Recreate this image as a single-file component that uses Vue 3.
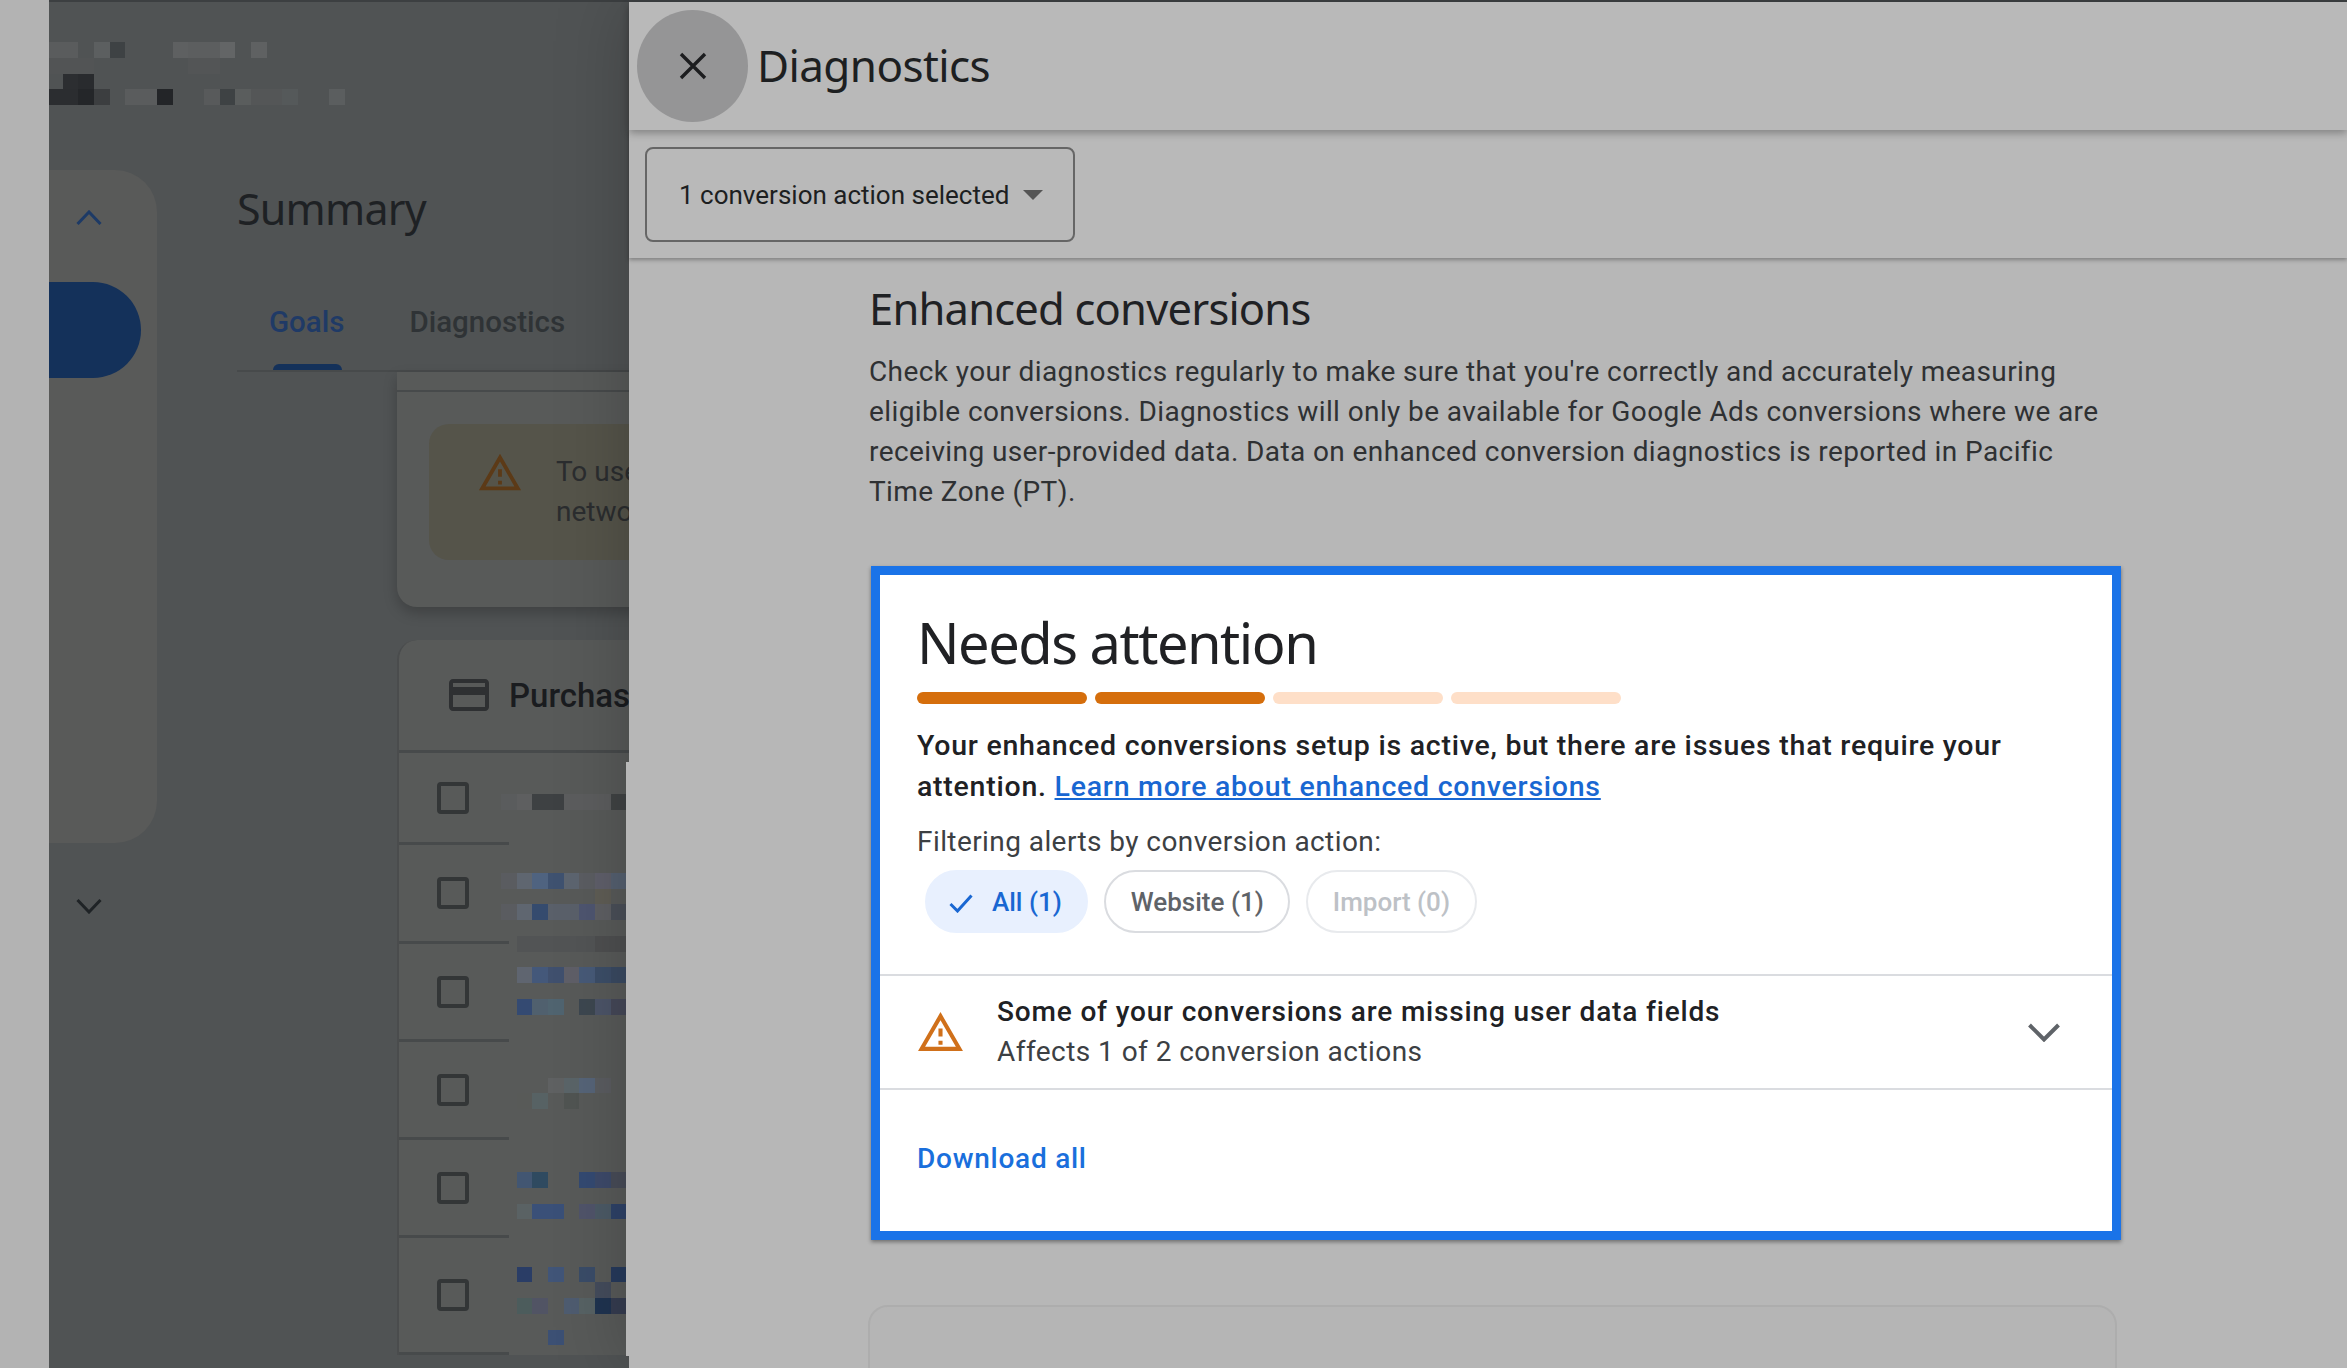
<script setup>
const topMosaic = [
  [0, 0, "#5a5c5d"], [0, 1, "#5a5c5d"], [0, 3, "#5c5f60"], [0, 4, "#3e4244"], [0, 8, "#5e6061"], [0, 9, "#5c5e5f"], [0, 10, "#5c5e5f"], [0, 11, "#636566"], [0, 13, "#5f6162"],
  [1, 0, "#525455"], [1, 1, "#525455"], [1, 2, "#525455"], [1, 9, "#535556"], [1, 10, "#535556"],
  [2, 1, "#2c2e31"], [2, 2, "#292b2e"],
  [3, 0, "#2b2d30"], [3, 1, "#2b2d30"], [3, 2, "#242629"], [3, 3, "#3c3e40"], [3, 5, "#5a5c5d"], [3, 6, "#5a5c5d"], [3, 7, "#232528"],
  [3, 10, "#585a5b"], [3, 11, "#3e4244"], [3, 12, "#5a5d5d"], [3, 13, "#545657"], [3, 14, "#545657"], [3, 15, "#55595a"], [3, 18, "#5b5e5f"],
];

// row, column, colour of the blurred names in the table
const rowMosaic = [
  [0, 0, "#5a5c5d"], [0, 1, "#5e5f60"], [0, 2, "#3e4143"], [0, 3, "#3e4143"], [0, 4, "#5c5d5e"], [0, 5, "#5c5d5e"], [0, 6, "#5c5d5e"], [0, 7, "#404344"],
  [5, 0, "#5a5c60"], [5, 1, "#5f6670"], [5, 2, "#4f6380"], [5, 3, "#3f5270"], [5, 4, "#5d6570"], [5, 5, "#5b5d62"], [5, 6, "#5f5f6a"], [5, 7, "#556070"],
  [6, 6, "#5f5d55"],
  [7, 0, "#5a5c60"], [7, 1, "#5f6670"], [7, 2, "#354b6e"], [7, 3, "#5a606a"], [7, 4, "#5a606a"], [7, 5, "#4e5570"], [7, 6, "#5e5f63"], [7, 7, "#4a4f58"],
  [9, 1, "#525455"], [9, 2, "#525455"], [9, 3, "#525455"], [9, 4, "#525455"], [9, 5, "#525455"], [9, 6, "#4e4f50"], [9, 7, "#4e4f50"],
  [11, 1, "#5f6570"], [11, 2, "#44587a"], [11, 3, "#40506e"], [11, 4, "#5f5f68"], [11, 5, "#475a78"], [11, 6, "#3c4e68"], [11, 7, "#3a4a62"],
  [13, 1, "#344a72"], [13, 2, "#50606e"], [13, 3, "#506470"], [13, 5, "#3d4750"], [13, 6, "#4c5468"], [13, 7, "#454858"],
  [18, 3, "#5f6162"], [18, 4, "#5a6468"], [18, 5, "#566478"], [18, 6, "#5a5c60"],
  [19, 1, "#585a58"], [19, 2, "#576264"], [19, 4, "#505452"],
  [24, 1, "#425672"], [24, 2, "#2f4a60"], [24, 5, "#344a72"], [24, 6, "#3d4a6a"], [24, 7, "#484c58"],
  [26, 1, "#5a6264"], [26, 2, "#3a5078"], [26, 3, "#3a5078"], [26, 5, "#50546a"], [26, 6, "#4c5a66"], [26, 7, "#2e4268"],
  [30, 1, "#2a3d66"], [30, 3, "#415578"], [30, 5, "#3a4c68"], [30, 7, "#263a5c"],
  [31, 6, "#444c5c"],
  [32, 1, "#4c5c5c"], [32, 2, "#515464"], [32, 4, "#4e5c70"], [32, 5, "#576264"], [32, 6, "#1f3350"], [32, 7, "#353c50"],
  [34, 3, "#3c5074"],
];

const tableRows = [92, 99, 98, 98, 98, 117];
const bars = [true, true, false, false];
const warningPath = "M1 21h22L12 2 1 21zm3.46-2L12 5.99 19.53 19H4.47zM11 16h2v2h-2zm0-6h2v4h-2z";
</script>

<template>
  <div class="screen">
    <div class="edge"></div>

    <div class="backdrop">
      <div class="mosaic mosaic-top">
        <i v-for="(c, i) in topMosaic" :key="i" :style="{ gridRow: c[0] + 1, gridColumn: c[1] + 1, background: c[2] }"></i>
      </div>

      <aside class="side">
        <div class="rail">
          <svg class="rail-chevron" viewBox="0 0 26 15"><path d="M1.5 14 13 2l11.5 12" fill="none" stroke="#1d3a66" stroke-width="3" /></svg>
          <div class="rail-pill"></div>
        </div>
        <svg class="rail-down" viewBox="0 0 26 15"><path d="M1.5 1 13 13 24.500 1" fill="none" stroke="#1f2326" stroke-width="3" /></svg>
      </aside>

      <main class="summary">
        <h2 class="summary-title">Summary</h2>
        <div class="tabs">
          <span class="tab tab-on">Goals</span>
          <span class="tab">Diagnostics</span>
        </div>

        <section class="bg-card notice-card">
          <div class="notice-top"></div>
          <div class="notice">
            <svg class="notice-icon" viewBox="0 0 24 24"><path :d="warningPath" fill="#5c3a17" /></svg>
            <p>To use conversion<br />network data</p>
          </div>
        </section>

        <section class="bg-card table-card">
          <header class="table-head">
            <svg class="card-icon" viewBox="0 0 24 24"><path d="M20 4H4c-1.110 0-1.990.89-1.990 2L2 18c0 1.110.89 2 2 2h16c1.110 0 2-.89 2-2V6c0-1.110-.89-2-2-2zm0 14H4v-6h16v6zm0-10H4V6h16v2z" fill="#2e3032" /></svg>
            <span>Purchase</span>
          </header>
          <div v-for="(h, i) in tableRows" :key="i" class="table-row" :style="{ height: h + 'px' }">
            <span class="check"></span>
          </div>
          <div class="mosaic mosaic-rows">
            <i v-for="(c, i) in rowMosaic" :key="i" :style="{ gridRow: c[0] + 1, gridColumn: c[1] + 1, background: c[2] }"></i>
          </div>
        </section>
      </main>
    </div>

    <div class="panel">
      <header class="panel-head">
        <button class="close">
          <svg viewBox="0 0 28 28"><path d="M2 2l24 24M26 2 2 26" fill="none" stroke="#1c1d1f" stroke-width="3.4" /></svg>
        </button>
        <h1>Diagnostics</h1>
      </header>

      <div class="panel-filter">
        <div class="select">
          <span>1 conversion action selected</span>
          <i class="select-arrow"></i>
        </div>
      </div>

      <div class="panel-body">
        <h2 class="section-title">Enhanced conversions</h2>
        <p class="section-text">
          Check your diagnostics regularly to make sure that you're correctly and accurately measuring
          eligible conversions. Diagnostics will only be available for Google Ads conversions where we are
          receiving user-provided data. Data on enhanced conversion diagnostics is reported in Pacific
          Time Zone (PT).
        </p>

        <section class="status-card">
          <div class="status-top">
            <h3>Needs attention</h3>
            <div class="bars">
              <span v-for="(on, i) in bars" :key="i" class="bar" :class="{ 'bar-on': on }"></span>
            </div>
            <p class="status-text">
              Your enhanced conversions setup is active, but there are issues that require your
              attention. <a href="#">Learn more about enhanced conversions</a>
            </p>
            <p class="filter-label">Filtering alerts by conversion action:</p>
            <div class="chips">
              <span class="chip chip-on">
                <svg viewBox="0 0 24 19"><path d="M1.500 10 8.500 17 22.500 1.500" fill="none" stroke="#1967d2" stroke-width="3" /></svg>
                All (1)
              </span>
              <span class="chip">Website (1)</span>
              <span class="chip chip-off">Import (0)</span>
            </div>
          </div>

          <div class="alert">
            <svg class="alert-icon" viewBox="0 0 24 24"><path :d="warningPath" fill="#d0701a" /></svg>
            <div class="alert-text">
              <strong>Some of your conversions are missing user data fields</strong>
              <span>Affects 1 of 2 conversion actions</span>
            </div>
            <svg class="alert-chevron" viewBox="0 0 32 19"><path d="M1.500 2 16 16.500 30.500 2" fill="none" stroke="#5f6368" stroke-width="4" /></svg>
          </div>

          <div class="status-foot">
            <a href="#">Download all</a>
          </div>
        </section>

        <section class="next-card"></section>
      </div>

      <!-- the panel edge sits 3px further left in this stretch -->
      <div class="panel-notch"></div>
    </div>
  </div>
</template>

<style>
html,
body {
  margin: 0;
  background: #b3b3b3;
}
</style>

<style scoped>
.screen {
  display: flex;
  width: 2347px;
  height: 1368px;
  overflow: hidden;
  background: #b3b3b3;
  font-family: Roboto, "Liberation Sans", sans-serif;
}

.edge {
  flex: 0 0 49px;
}

/* dimmed page behind the panel */
.backdrop {
  position: relative;
  display: flex;
  flex: 0 0 580px;
  overflow: hidden;
  border-top: 2px solid #3c3f41;
  background: #505354;
}

.mosaic {
  position: absolute;
  display: grid;
  grid-auto-columns: 15.7px;
  grid-auto-rows: 15.75px;
}

.mosaic-top {
  top: 40px;
  left: -2px;
}

.side {
  display: flex;
  flex: 0 0 108px;
  flex-direction: column;
  padding-top: 168px;
}

.rail {
  height: 673px;
  border-radius: 0 42px 42px 0;
  background: #595a59;
}

.rail-chevron {
  display: block;
  width: 26px;
  height: 15px;
  margin: 40px 0 0 27px;
}

.rail-pill {
  width: 92px;
  height: 96px;
  margin-top: 57px;
  border-radius: 0 48px 48px 0;
  background: #14315a;
}

.rail-down {
  display: block;
  width: 26px;
  height: 15px;
  margin: 56px 0 0 27px;
}

.summary {
  flex: 1;
  min-width: 0;
  padding: 0 0 0 80px;
}

.summary-title {
  margin: 179px 0 0;
  color: #1e2124;
  font-family: "Noto Sans", sans-serif;
  font-size: 43px;
  font-weight: 400;
  line-height: 56px;
  letter-spacing: -0.8px;
}

.tabs {
  display: flex;
  gap: 65px;
  box-sizing: border-box;
  height: 135px;
  padding: 65px 0 0 32px;
  border-bottom: 2px solid #474a4b;
}

.tab {
  position: relative;
  color: #2f3336;
  font-size: 29.5px;
  font-weight: 500;
  line-height: 40px;
}

.tab-on {
  color: #1f3a66;
}

.tab-on::after {
  content: "";
  position: absolute;
  left: 4px;
  right: 2px;
  bottom: 0;
  height: 6px;
  border-radius: 6px 6px 0 0;
  background: #14315a;
}

.bg-card {
  width: 1400px;
  margin-left: 160px;
  background: #585a59;
}

.notice-card {
  height: 235px;
  border-radius: 0 0 20px 20px;
  box-shadow: 0 6px 14px rgba(0, 0, 0, 0.22);
}

.notice-top {
  height: 18px;
  border-bottom: 2px solid #474a4b;
}

.notice {
  display: flex;
  height: 136px;
  margin: 32px 0 0 32px;
  padding-left: 48px;
  border-radius: 20px;
  background: #55544a;
}

.notice-icon {
  flex: none;
  width: 46px;
  height: 46px;
  margin-top: 26px;
}

.notice p {
  margin: 28px 0 0 33px;
  color: #2b2d2f;
  font-size: 28px;
  line-height: 40px;
  white-space: nowrap;
}

.table-card {
  position: relative;
  margin-top: 33px;
  border-left: 2px solid #4a4c4d;
  border-radius: 20px 0 0 0;
}

.table-head {
  display: flex;
  align-items: center;
  gap: 16px;
  height: 110px;
  padding-left: 46px;
  border-bottom: 3px solid #474a4b;
  color: #1a1c1f;
  font-size: 33px;
  font-weight: 500;
}

.card-icon {
  width: 48px;
  height: 48px;
}

.table-row {
  display: flex;
  align-items: center;
  box-sizing: border-box;
  width: 110px;
  padding-left: 38px;
  border-bottom: 3px solid #474a4b;
}

.check {
  width: 32px;
  height: 32px;
  box-sizing: border-box;
  border: 4px solid #333637;
  border-radius: 4px;
}

.mosaic-rows {
  top: 154px;
  left: 102px;
}

/* diagnostics panel */
.panel {
  position: relative;
  z-index: 1;
  flex: 1;
  min-width: 0;
  border-top: 2px solid #3c3f41;
  background: #b7b7b7;
  box-shadow: 0 0 70px rgba(0, 0, 0, 0.22);
}

.panel-head {
  position: relative;
  z-index: 2;
  display: flex;
  align-items: center;
  height: 128px;
  padding-left: 8px;
  background: #b9b9b9;
  box-shadow: 0 3px 8px rgba(0, 0, 0, 0.3);
}

.panel-head h1 {
  margin: -2px 0 0 9px;
  color: #1d1f21;
  font-family: "Noto Sans", sans-serif;
  font-size: 44px;
  font-weight: 400;
  letter-spacing: -0.6px;
}

.close {
  display: flex;
  align-items: center;
  justify-content: center;
  width: 111px;
  height: 112px;
  padding: 0;
  border: 0;
  border-radius: 50%;
  background: #959596;
}

.close svg {
  width: 28px;
  height: 28px;
}

.panel-filter {
  position: relative;
  z-index: 1;
  height: 128px;
  padding: 17px 0 0 16px;
  box-sizing: border-box;
  background: #b9b9b9;
  box-shadow: 0 2px 4px rgba(0, 0, 0, 0.3);
}

.select {
  display: flex;
  align-items: center;
  box-sizing: border-box;
  width: 430px;
  height: 95px;
  padding-left: 32px;
  border: 2px solid #666;
  border-radius: 8px;
  color: #1d1f21;
  font-size: 26px;
}

.select-arrow {
  width: 0;
  height: 0;
  margin-left: 14px;
  border-top: 10px solid #555;
  border-left: 10px solid transparent;
  border-right: 10px solid transparent;
}

.panel-body {
  padding: 20px 0 0 240px;
}

.section-title {
  margin: 0;
  color: #1f2124;
  font-family: "Noto Sans", sans-serif;
  font-size: 43.5px;
  font-weight: 400;
  line-height: 60px;
  letter-spacing: -0.8px;
}

.section-text {
  width: 1240px;
  margin: 14px 0 0;
  color: #2f3133;
  font-size: 28px;
  line-height: 40px;
  letter-spacing: 0.4px;
}

.status-card {
  box-sizing: border-box;
  width: 1250px;
  margin: 54px 0 0 2px;
  border: 9px solid #1a73e8;
  background: #fff;
  box-shadow: 0 2px 4px rgba(0, 0, 0, 0.4);
}

.status-top {
  height: 399px;
  box-sizing: border-box;
  padding: 31px 0 0 37px;
}

.status-top h3 {
  margin: 0;
  color: #202124;
  font-family: "Noto Sans", sans-serif;
  font-size: 56px;
  font-weight: 400;
  line-height: 72px;
  letter-spacing: -1.5px;
}

.bars {
  display: flex;
  gap: 8px;
  margin-top: 14px;
}

.bar {
  width: 170px;
  height: 12px;
  border-radius: 6px;
  background: #fedfc8;
}

.bar-on {
  background: #d56e0c;
}

.status-text {
  width: 1130px;
  margin: 22px 0 0;
  color: #202124;
  font-size: 28.5px;
  font-weight: 500;
  line-height: 40.5px;
  letter-spacing: 0.75px;
}

.status-text a {
  color: #1967d2;
}

.filter-label {
  margin: 15px 0 0;
  color: #3c4043;
  font-size: 28px;
  line-height: 40px;
  letter-spacing: 0.42px;
}

.chips {
  display: flex;
  gap: 16px;
  margin: 8px 0 0 8px;
}

.chip {
  display: flex;
  align-items: center;
  box-sizing: border-box;
  height: 63px;
  padding: 0 24.5px;
  border: 2px solid #dadce0;
  border-radius: 32px;
  color: #5f6368;
  font-size: 26px;
  font-weight: 500;
}

.chip svg {
  width: 24px;
  height: 19px;
  margin: 3px 19px 0 -2.5px;
}

.chip-on {
  border-color: #e8f0fe;
  background: #e8f0fe;
  color: #1967d2;
}

.chip-off {
  border-color: #e8eaed;
  color: #bdc1c6;
}

.alert {
  display: flex;
  align-items: center;
  box-sizing: border-box;
  height: 116px;
  padding: 0 52px 0 36px;
  border-top: 2px solid #dadce0;
  border-bottom: 2px solid #dadce0;
}

.alert-icon {
  flex: none;
  width: 49px;
  height: 49px;
}

.alert-text {
  display: flex;
  flex: 1;
  flex-direction: column;
  margin-left: 32px;
  font-size: 28px;
  line-height: 40px;
}

.alert-text strong {
  color: #202124;
  font-weight: 500;
  letter-spacing: 0.84px;
}

.alert-text span {
  color: #3c4043;
  letter-spacing: 0.45px;
}

.alert-chevron {
  flex: none;
  width: 32px;
  height: 19px;
}

.status-foot {
  padding: 49px 0 52px 37px;
  font-size: 28px;
  font-weight: 500;
  line-height: 40px;
  letter-spacing: 0.75px;
}

.status-foot a {
  color: #1a6fdc;
  text-decoration: none;
}

.next-card {
  width: 1245px;
  height: 120px;
  margin: 65px 0 0 -1px;
  border: 2px solid #adadad;
  border-radius: 20px 20px 0 0;
  background: #b5b5b5;
}

.panel-notch {
  position: absolute;
  top: 760px;
  left: -3px;
  width: 3px;
  height: 594px;
  background: #b7b7b7;
}
</style>
